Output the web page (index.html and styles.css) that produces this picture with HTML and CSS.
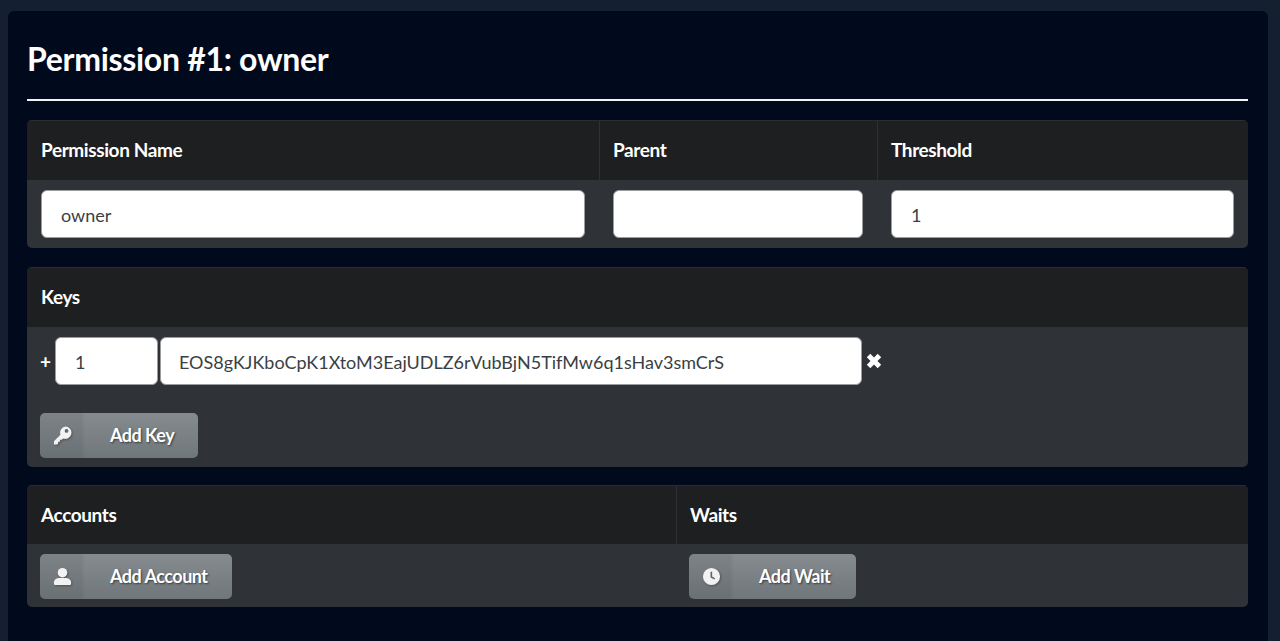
FILE: index.html
```html
<!DOCTYPE html>
<html lang="en">
<head>
<meta charset="utf-8">
<title>Permission #1: owner</title>
<link rel="stylesheet" href="styles.css">
</head>
<body>
<main class="panel">
  <h1 class="title">Permission #1: owner</h1>
  <hr class="rule">

  <section class="card">
    <div class="head cols-perm">
      <div class="head-cell">Permission Name</div>
      <div class="head-cell">Parent</div>
      <div class="head-cell">Threshold</div>
    </div>
    <div class="body cols-perm">
      <div class="body-cell"><input class="field" type="text" value="owner"></div>
      <div class="body-cell"><input class="field" type="text" value=""></div>
      <div class="body-cell"><input class="field" type="text" value="1"></div>
    </div>
  </section>

  <section class="card tight">
    <div class="head"><div class="head-cell">Keys</div></div>
    <div class="keys-body">
      <div class="key-row">
        <span class="plus">+</span>
        <input class="field weight" type="text" value="1">
        <input class="field key" type="text" value="EOS8gKJKboCpK1XtoM3EajUDLZ6rVubBjN5TifMw6q1sHav3smCrS">
        <svg class="remove" viewBox="0 0 16 16" aria-hidden="true"><path d="M4.300.8 8 4.500 11.700.8 15.200 4.300 11.500 8 15.200 11.700 11.700 15.200 8 11.500 4.300 15.200.8 11.700 4.500 8 .8 4.300Z"/></svg>
      </div>
      <button class="btn btn-key" type="button">
        <span class="btn-icon"><svg viewBox="0 0 20 20" aria-hidden="true"><path fill-rule="evenodd" d="M13 .5a6.500 6.500 0 1 1-2.300 12.600l-1.500 1.500H7.300v2H5.400v1.900l-1 1H1v-3.400l6.900-6.900A6.500 6.500 0 0 1 13 .5Zm1.300 2.700a2 2 0 1 0 0 4 2 2 0 0 0 0-4Z"/></svg></span>
        <span class="btn-label">Add Key</span>
      </button>
    </div>
  </section>

  <section class="card">
    <div class="head short cols-acct">
      <div class="head-cell">Accounts</div>
      <div class="head-cell">Waits</div>
    </div>
    <div class="body cols-acct">
      <div class="body-cell">
        <button class="btn btn-acct" type="button">
          <span class="btn-icon"><svg viewBox="0 0 20 20" aria-hidden="true"><circle cx="10" cy="6" r="5"/><path d="M7.500 11.500h5c3.500 0 6.500 1.500 6.500 4.500v1.500c0 .8-.7 1.500-1.500 1.500h-15c-.8 0-1.500-.7-1.500-1.500V16c0-3 3-4.500 6.500-4.500Z"/></svg></span>
          <span class="btn-label">Add Account</span>
        </button>
      </div>
      <div class="body-cell">
        <button class="btn btn-wait" type="button">
          <span class="btn-icon"><svg viewBox="0 0 20 20" aria-hidden="true"><path fill-rule="evenodd" d="M10 1a9 9 0 1 1 0 18 9 9 0 0 1 0-18ZM9 5v6l4 2.200.8-1.300L10.700 10V5H9Z"/></svg></span>
          <span class="btn-label">Add Wait</span>
        </button>
      </div>
    </div>
  </section>
</main>
</body>
</html>
```

FILE: styles.css
```css
* { box-sizing: border-box; }

html, body { height: 100%; }

body {
  margin: 0;
  padding: 11px 12px 0 8px;
  overflow: hidden;
  background: #14202f;
  font-family: Lato, "Open Sans", sans-serif;
  color: #fff;
}

.panel {
  height: 630px;
  padding: 27px 20px 0 19px;
  background: #000a1c;
  border-radius: 6px 6px 0 0;
}

.title {
  margin: 0;
  font-size: 32px;
  line-height: 42px;
  font-weight: 700;
  letter-spacing: -0.3px;
}

.rule {
  margin: 19px 0 19px;
  height: 2px;
  border: 0;
  background: #f2f2f2;
}

.card {
  margin-bottom: 19px;
  border-radius: 5px;
  overflow: hidden;
  background: #2f3338;
}

.card.tight { margin-bottom: 18px; }

.head {
  display: flex;
  height: 60px;
  background: #1e1f21;
  border-top: 1px solid #2a2c30;
}

.head.short { height: 59px; }

.body { display: flex; height: 68px; }

.cols-perm > :nth-child(1) { width: 572px; }
.cols-perm > :nth-child(2) { width: 278px; }
.cols-perm > :nth-child(3) { flex: 1; }

.cols-acct > :nth-child(1) { width: 649px; }
.cols-acct > :nth-child(2) { flex: 1; }

.head-cell {
  display: flex;
  align-items: center;
  padding: 0 13px 2px;
  font-size: 19px;
  font-weight: 700;
  letter-spacing: -0.4px;
  border-left: 1px solid #2e3035;
}

.head-cell:first-child {
  padding-left: 14px;
  border-left: 0;
}

.body-cell { padding: 10px 14px 0; }

.cols-acct.body { height: 63px; }
.cols-acct .body-cell { padding-left: 13px; }

.field {
  display: block;
  width: 100%;
  height: 48px;
  padding: 1px 19px 0;
  border: 1px solid #9a9da0;
  border-radius: 6px;
  background: #fff;
  color: #3a3f44;
  font: 400 18px Lato, "Open Sans", sans-serif;
  outline: 0;
}

.keys-body { height: 140px; padding: 10px 13px 0 14px; }

.key-row { display: flex; align-items: center; height: 48px; }

.plus {
  width: 15px;
  margin-left: -1px;
  font-size: 19px;
  font-weight: 700;
  line-height: 1;
}

.weight { width: 103px; margin-right: 2px; }
.key { width: 702px; margin-right: 4px; padding: 1px 18px 0; }

.remove { width: 16px; height: 16px; fill: #fff; }

.btn {
  display: flex;
  align-items: stretch;
  height: 45px;
  padding: 0;
  border: 0;
  border-radius: 5px;
  overflow: hidden;
  color: #fff;
  font: 700 18px Lato, "Open Sans", sans-serif;
  letter-spacing: -0.5px;
  text-shadow: 1px 1px 2px rgba(0, 0, 0, 0.55);
  background: linear-gradient(#858b8f, #70777b);
}

.btn-key { width: 158px; margin-top: 28px; margin-left: -1px; }
.btn-acct { width: 192px; }
.btn-wait { width: 167px; }

.btn-icon {
  display: flex;
  align-items: center;
  justify-content: center;
  width: 45px;
  background: linear-gradient(90deg, rgba(0, 0, 0, 0.06) 92%, rgba(0, 0, 0, 0));
}

.btn-icon svg {
  width: 19px;
  height: 19px;
  fill: #f2f2f2;
  filter: drop-shadow(1px 1px 1px rgba(0, 0, 0, 0.3));
}

.btn-label {
  flex: 1;
  align-self: center;
  padding: 0 0 2px 25px;
  text-align: left;
}
```
